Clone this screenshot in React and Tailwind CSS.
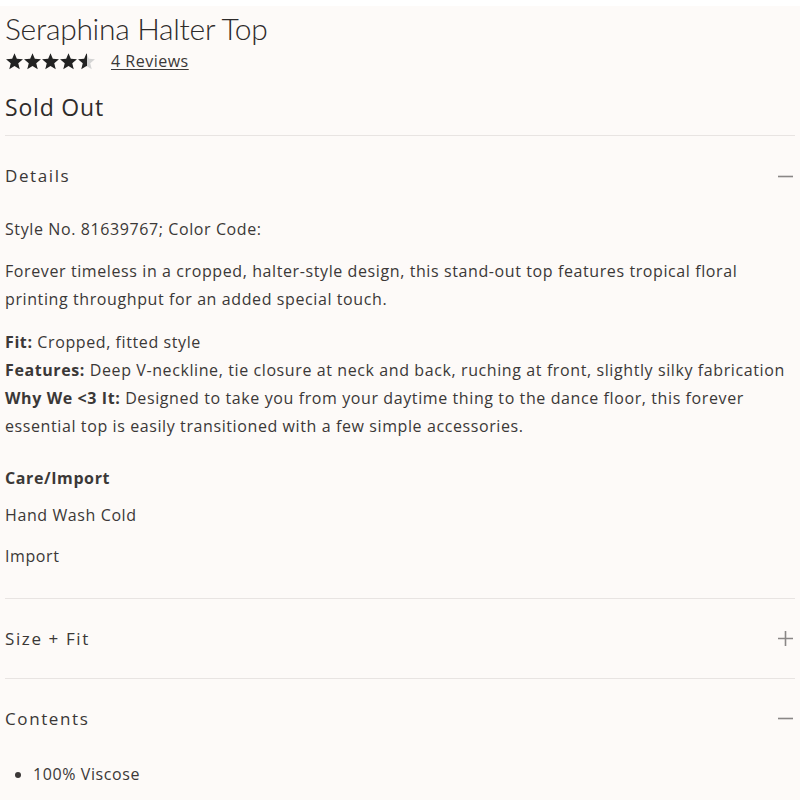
import React from "react";

const Star = ({ fill = 1 }) => (
  <svg width="19" height="18" viewBox="0 0 24 24">
    <defs>
      <linearGradient id={`g${fill}`}>
        <stop offset={`${fill * 100}%`} stopColor="#222" />
        <stop offset={`${fill * 100}%`} stopColor="#d4d4d4" />
      </linearGradient>
    </defs>
    <path
      d="M12 1.5l3.1 7.6 8.2.6-6.3 5.3 2 8-7-4.4-7 4.4 2-8L.7 9.7l8.2-.6z"
      fill={`url(#g${fill})`}
    />
  </svg>
);

const Minus = () => (
  <svg width="15" height="15" viewBox="0 0 15 15" className="text-[#8a8786]">
    <path d="M0 7.5h15" stroke="currentColor" strokeWidth="1.6" />
  </svg>
);

const Plus = () => (
  <svg width="15" height="15" viewBox="0 0 15 15" className="text-[#8a8786]">
    <path d="M0 7.5h15M7.5 0v15" stroke="currentColor" strokeWidth="1.6" />
  </svg>
);

const SectionHead = ({ title, open, tall }) => (
  <div className={`flex items-center justify-between pr-[2px] ${tall ? "h-[80px]" : "h-[79px]"}`}>
    <span className="text-[17px] tracking-[1.6px] text-[#3a3736]">{title}</span>
    {open ? <Minus /> : <Plus />}
  </div>
);

export default function App() {
  return (
    <div className="min-h-[800px] bg-white pt-[6px] font-['Open_Sans',sans-serif] text-[#3b3837]">
      <div className="bg-[#fdfaf8] min-h-[794px] px-[5px]">
        <h1 className="pt-[4px] font-['Lato',sans-serif] font-light text-[30px] leading-[36px] tracking-[-0.3px] text-[#2e2b2a]">
          Seraphina Halter Top
        </h1>
        <div className="flex items-center h-[22px] gap-[15px] mt-[4px]">
          <div className="flex -space-x-[1px]">
            <Star />
            <Star />
            <Star />
            <Star />
            <Star fill={0.55} />
          </div>
          <a className="text-[16px] tracking-[0.5px] underline underline-offset-2 text-[#3b3837]">
            4 Reviews
          </a>
        </div>
        <div className="text-[23px] tracking-[0.8px] mt-[20px] leading-[30px] text-[#2f2c2b]">
          Sold Out
        </div>
        <div className="border-b border-[#e8e4e2] mt-[13px]" />

        <SectionHead title="Details" open tall />
        <div className="text-[16px] leading-[28px] tracking-[0.6px]">
          <p className="-mt-[1px]">Style No. 81639767; Color Code:</p>
          <p className="mt-[14px]">
            Forever timeless in a cropped, halter-style design, this stand-out top features tropical floral
            <br />
            printing throughput for an added special touch.
          </p>
          <p className="mt-[15px]">
            <b className="font-bold">Fit:</b> Cropped, fitted style
          </p>
          <p className="whitespace-nowrap">
            <b className="font-bold">Features:</b> Deep V-neckline, tie closure at neck and back, ruching at front, slightly silky fabrication
          </p>
          <p>
            <b className="font-bold">Why We &lt;3 It:</b> Designed to take you from your daytime thing to the dance floor, this forever
            <br />
            essential top is easily transitioned with a few simple accessories.
          </p>
          <p className="font-bold mt-[24px]">Care/Import</p>
          <p className="mt-[9px]">Hand Wash Cold</p>
          <p className="mt-[13px]">Import</p>
        </div>
        <div className="border-b border-[#e8e4e2] mt-[28px]" />

        <SectionHead title="Size + Fit" />
        <div className="border-b border-[#e8e4e2]" />

        <SectionHead title="Contents" open />
        <ul className="list-disc pl-[28px] text-[16px] leading-[28px] tracking-[0.6px] mt-[2px]">
          <li>100% Viscose</li>
        </ul>
      </div>
    </div>
  );
}
